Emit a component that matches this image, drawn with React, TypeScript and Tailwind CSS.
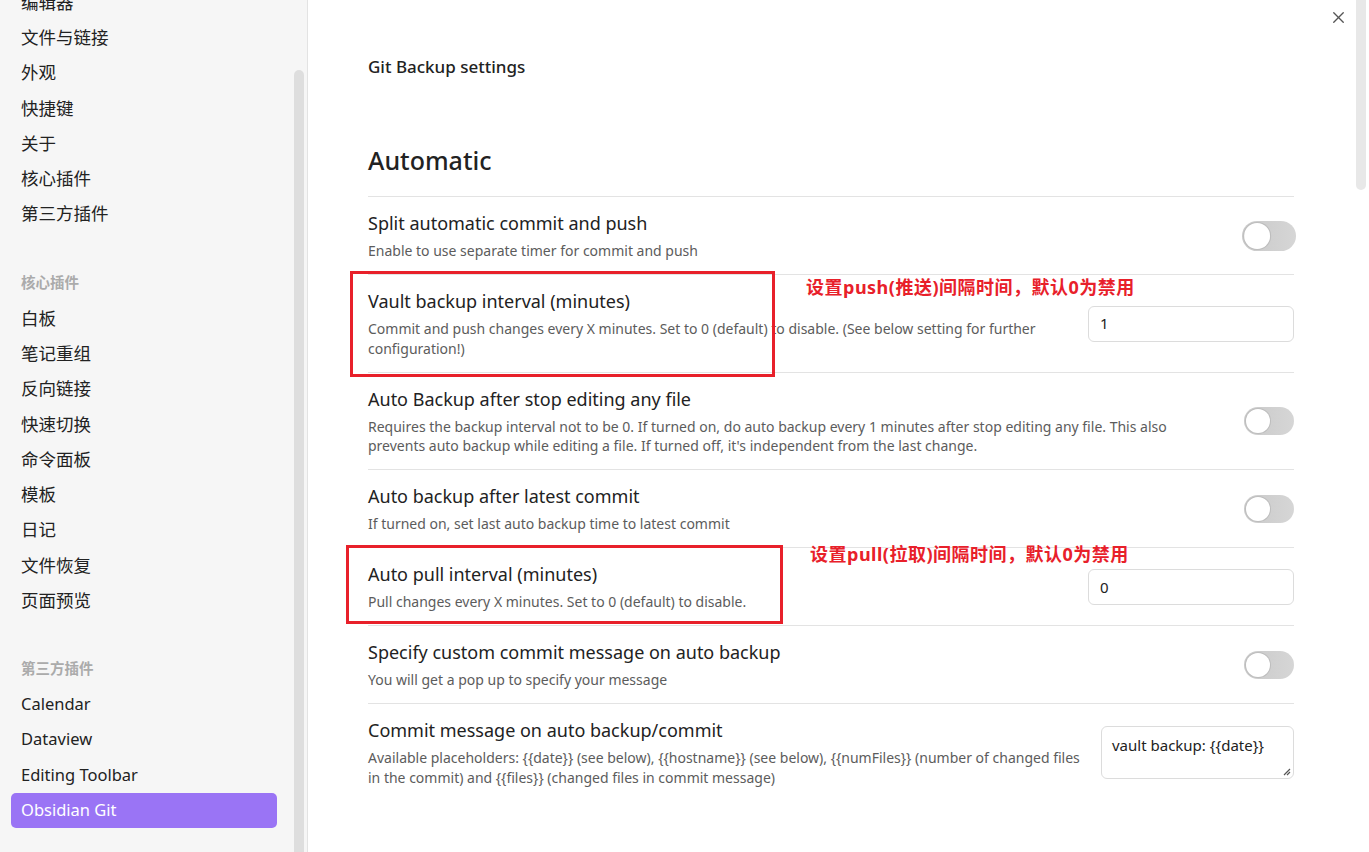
import { X } from 'lucide-react';

const groups = [
  { heading: null, items: ['编辑器', '文件与链接', '外观', '快捷键', '关于', '核心插件', '第三方插件'] },
  { heading: '核心插件', items: ['白板', '笔记重组', '反向链接', '快速切换', '命令面板', '模板', '日记', '文件恢复', '页面预览'] },
  { heading: '第三方插件', items: ['Calendar', 'Dataview', 'Editing Toolbar', 'Obsidian Git'] },
];

type Row = {
  title: string;
  desc: string[];
  control: 'toggle' | 'input' | 'textarea';
  value?: string;
  hover?: boolean;
};

const rows: Row[] = [
  { title: 'Split automatic commit and push', desc: ['Enable to use separate timer for commit and push'], control: 'toggle', hover: true },
  {
    title: 'Vault backup interval (minutes)',
    desc: ['Commit and push changes every X minutes. Set to 0 (default) to disable. (See below setting for further', 'configuration!)'],
    control: 'input',
    value: '1',
  },
  {
    title: 'Auto Backup after stop editing any file',
    desc: [
      'Requires the backup interval not to be 0. If turned on, do auto backup every 1 minutes after stop editing any file. This also',
      "prevents auto backup while editing a file. If turned off, it's independent from the last change.",
    ],
    control: 'toggle',
  },
  { title: 'Auto backup after latest commit', desc: ['If turned on, set last auto backup time to latest commit'], control: 'toggle' },
  { title: 'Auto pull interval (minutes)', desc: ['Pull changes every X minutes. Set to 0 (default) to disable.'], control: 'input', value: '0' },
  { title: 'Specify custom commit message on auto backup', desc: ['You will get a pop up to specify your message'], control: 'toggle' },
  {
    title: 'Commit message on auto backup/commit',
    desc: [
      'Available placeholders: {{date}} (see below), {{hostname}} (see below), {{numFiles}} (number of changed files',
      'in the commit) and {{files}} (changed files in commit message)',
    ],
    control: 'textarea',
  },
];

function Toggle({ hover }: { hover?: boolean }) {
  return (
    <div
      className={`w-[50px] h-[28px] rounded-full bg-gradient-to-r from-[#c9c9c9] to-[#d6d6d6] p-[2px] flex items-center ${
        hover ? 'scale-[1.08]' : ''
      }`}
    >
      <div className="w-[24px] h-[24px] rounded-full bg-white shadow-[0_0_0_1px_#bdbdbd]"></div>
    </div>
  );
}

export default function App() {
  return (
    <div className="w-[1369px] h-[852px] flex overflow-hidden bg-white font-['Noto_Sans','Noto_Sans_CJK_SC',sans-serif] text-[#222]">
      {/* Sidebar */}
      <div className="relative w-[308px] shrink-0 h-full bg-[#f6f6f6] border-r border-[#e3e3e3] overflow-hidden">
        <div className="mt-[-15.6px] pl-[11px] w-[277px]">
          {groups.map((g, gi) => (
            <div key={gi} className={gi > 0 ? 'mt-[34px]' : ''}>
              {g.heading && (
                <div className="h-[35.25px] flex items-center px-[10px] text-[14.5px] font-bold text-[#ababab]">{g.heading}</div>
              )}
              {g.items.map((it) => (
                <div
                  key={it}
                  className={`h-[35.25px] flex items-center px-[10px] rounded-[5px] ${
                    /^[A-Za-z]/.test(it) ? 'text-[16.5px]' : 'text-[17.5px]'
                  } ${it === 'Obsidian Git' ? 'bg-[#9a74f5] text-white' : ''}`}
                >
                  {it}
                </div>
              ))}
            </div>
          ))}
        </div>
        {/* scrollbar */}
        <div className="absolute left-[294px] top-[70px] w-[10px] h-[800px] rounded-t-full bg-[#dedede]"></div>
      </div>

      {/* Main */}
      <div className="relative flex-1 h-full pl-[60px] pr-[75px] pt-[55px]">
        <div className="text-[17px] font-medium leading-[24px]">Git Backup settings</div>
        <div className="mt-[65px] text-[25px] font-medium leading-[32px] mb-[20px]">Automatic</div>

        <div>
          {rows.map((r) => (
            <div key={r.title} className="flex items-center border-t border-[#e3e3e3] pt-[14px] pb-[13.5px]">
              <div className="flex-1 min-w-0">
                <div className="text-[18px] leading-[24px] h-[24px]">{r.title}</div>
                <div className="mt-[6px] text-[14px] text-[#5c5c5c]">
                  {r.desc.map((d) => (
                    <div key={d} className="whitespace-nowrap h-[19.5px] leading-[19.5px]">
                      {d}
                    </div>
                  ))}
                </div>
              </div>
              {r.control === 'toggle' && <Toggle hover={r.hover} />}
              {r.control === 'input' && (
                <div className="w-[206px] h-[36px] rounded-[6px] border border-[#dcdcdc] flex items-center px-[11px] text-[15px]">
                  {r.value}
                </div>
              )}
              {r.control === 'textarea' && (
                <div className="relative w-[193px] h-[53px] rounded-[6px] border border-[#dcdcdc] px-[10px] pt-[7px] text-[15px] leading-[22px]">
                  {'vault backup: {{date}}'}
                  <svg className="absolute right-[2px] bottom-[2px]" width="9" height="9" viewBox="0 0 9 9">
                    <path d="M8 2 L2 8 M8 5 L5 8" stroke="#555" strokeWidth="1.2" />
                  </svg>
                </div>
              )}
            </div>
          ))}
        </div>

        {/* close button */}
        <div className="absolute left-[1021px] top-[8px] text-[#555]">
          <X size={19} strokeWidth={1.7} />
        </div>
        {/* scrollbar */}
        <div className="absolute left-[1048px] top-0 w-[10px] h-[190px] rounded-b-full bg-[#e8e8e8]"></div>

        {/* annotations */}
        <div className="absolute left-[42px] top-[271px] w-[425px] h-[106px] border-[3px] border-[#e8202a]"></div>
        <div className="absolute left-[498px] top-[275px] text-[18px] tracking-[0.5px] font-bold leading-[24px] text-[#e8202a]">
          设置push(推送)间隔时间，默认0为禁用
        </div>
        <div className="absolute left-[38px] top-[545px] w-[437px] h-[79px] border-[3px] border-[#e8202a]"></div>
        <div className="absolute left-[502px] top-[542px] text-[18px] tracking-[0.5px] font-bold leading-[24px] text-[#e8202a]">
          设置pull(拉取)间隔时间，默认0为禁用
        </div>
      </div>
    </div>
  );
}
